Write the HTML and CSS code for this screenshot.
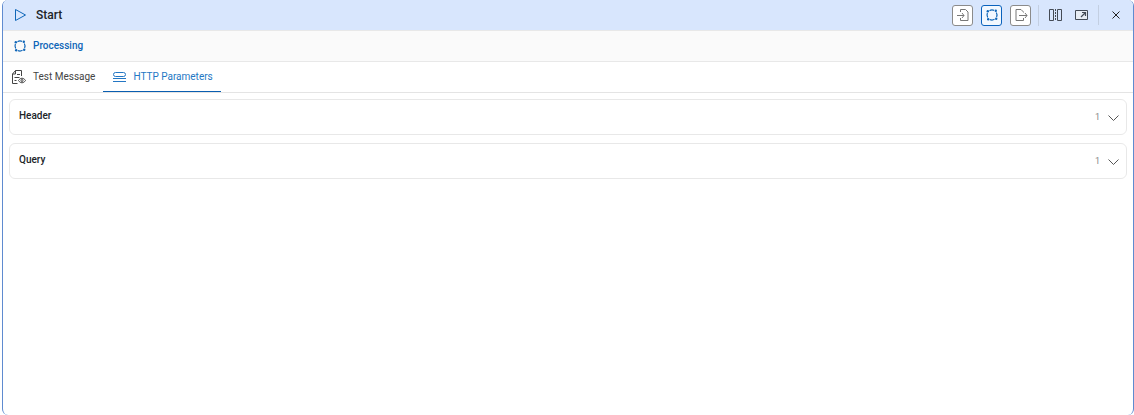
FILE: index.html
```html
<!DOCTYPE html>
<html lang="en">
<head>
    <meta charset="UTF-8">
    <meta name="viewport" content="width=device-width, initial-scale=1.0">
    <title>Start</title>
    <link rel="stylesheet" href="styles.css">
</head>
<body>
    <main class="panel">
        <header class="panel-header">
            <svg class="icon blue" viewBox="0 0 14 14"><path d="M2.500 1.500 12.500 7l-10 5.500z"/></svg>
            <h1 class="title">Start</h1>
            <div class="actions">
                <div class="steps">
                    <button type="button" class="step" aria-label="Input">
                        <svg class="icon" viewBox="0 0 14 14"><path d="M4.500 4V1.500H9.500L12 4v8.500H4.500V10M1 7.500h7M6 5l2 2.500-2 2.500"/></svg>
                    </button>
                    <button type="button" class="step active" aria-label="Processing">
                        <svg class="icon" viewBox="0 0 14 14"><path d="M4.500 2.700a5 5 0 0 1 4.500-.3M11.300 4.500a5 5 0 0 1 .3 4.500M9.500 11.300a5 5 0 0 1-4.500.3M2.700 9.500a5 5 0 0 1-.3-4.500" stroke-width="1.200"/><g fill="currentColor" stroke="none"><circle cx="10.800" cy="2.800" r="1.200"/><circle cx="11.200" cy="10.800" r="1.200"/><circle cx="3.200" cy="11.200" r="1.200"/><circle cx="2.800" cy="3.200" r="1.200"/></g></svg>
                    </button>
                    <button type="button" class="step" aria-label="Output">
                        <svg class="icon" viewBox="0 0 14 14"><path d="M9.500 4.500V4L7 1.500H2v11h7.500V10M5 7.500h8M11 5l2 2.500-2 2.500"/></svg>
                    </button>
                </div>
                <div class="tools">
                    <button type="button" class="tool" aria-label="Split view">
                        <svg class="icon" viewBox="0 0 14 14"><path d="M.5 1.500h4v11h-4zM8.500 1.500h4v11h-4z"/><path d="M6.500 1v12" stroke-dasharray="2 1"/></svg>
                    </button>
                    <button type="button" class="tool" aria-label="Maximize">
                        <svg class="icon" viewBox="0 0 14 14"><path d="M.5 2.500h12v9H.5z" fill="#e8edf3"/><path d="M6 9l4-4M7 4.500h3.500V8" stroke-width="1.200"/></svg>
                    </button>
                </div>
                <button type="button" class="tool close" aria-label="Close">
                    <svg class="icon" viewBox="0 0 14 14"><path d="m3.500 3.500 7 7M10.500 3.500l-7 7"/></svg>
                </button>
            </div>
        </header>

        <div class="section-bar">
            <svg class="icon blue" viewBox="0 0 14 14"><path d="M4.500 2.700a5 5 0 0 1 4.500-.3M11.300 4.500a5 5 0 0 1 .3 4.500M9.500 11.300a5 5 0 0 1-4.500.3M2.700 9.500a5 5 0 0 1-.3-4.500" stroke-width="1.200"/><g fill="currentColor" stroke="none"><circle cx="10.800" cy="2.800" r="1.200"/><circle cx="11.200" cy="10.800" r="1.200"/><circle cx="3.200" cy="11.200" r="1.200"/><circle cx="2.800" cy="3.200" r="1.200"/></g></svg>
            <h2 class="section-title">Processing</h2>
        </div>

        <div class="tabs" role="tablist">
            <button type="button" class="tab" role="tab" aria-selected="false">
                <svg class="icon" viewBox="0 0 14 14"><path d="M5.500 13.500H.5V4L3.500.5h6V6M3.500.5V4h-3M5 4.500h3M2.500 7.500h5M2.500 10.500h2"/><path d="M6.500 10.500c2-3 5-3 7 0-2 3-5 3-7 0z"/><circle cx="10" cy="10.500" r="1"/></svg>
                Test Message
            </button>
            <button type="button" class="tab selected" role="tab" aria-selected="true">
                <svg class="icon" viewBox="0 0 14 14"><rect x="1.500" y="2.500" width="12" height="4" rx="2"/><path d="M1 8.500h13M1 11.500h13"/></svg>
                HTTP Parameters
            </button>
        </div>

        <div class="groups">
            <button type="button" class="group" aria-expanded="false">
                <span class="group-name">Header</span>
                <span class="count">1</span>
                <svg class="icon chevron" viewBox="0 0 14 14"><path d="m2.500 5.500 5 5 5-5"/></svg>
            </button>
            <button type="button" class="group" aria-expanded="false">
                <span class="group-name">Query</span>
                <span class="count">1</span>
                <svg class="icon chevron" viewBox="0 0 14 14"><path d="m2.500 5.500 5 5 5-5"/></svg>
            </button>
        </div>
    </main>
</body>
</html>
```
FILE: styles.css
```css
* {
    box-sizing: border-box;
}

body {
    margin: 0;
    background-color: #fff;
    color: #202428;
    font: 10px/16px Roboto, "Open Sans", sans-serif;
}

h1,
h2 {
    margin: 0;
}

button {
    margin: 0;
    padding: 0;
    border: none;
    background: none;
    color: inherit;
    font: inherit;
    cursor: pointer;
}

.icon {
    display: block;
    flex: none;
    width: 14px;
    height: 14px;
    fill: none;
    stroke: currentColor;
}

.blue {
    color: #0f66b8;
}

.panel {
    min-height: 100vh;
    margin-left: 2px;
    border: 1px solid #5f8bd0;
    border-width: 0 1px;
    border-radius: 6px;
    overflow: hidden;
}

.panel-header {
    display: flex;
    align-items: center;
    gap: 9px;
    height: 30px;
    padding: 0 7px 0 10px;
    background-color: #d8e6fd;
}

.title {
    font-size: 12px;
    font-weight: 500;
}

.actions {
    display: flex;
    align-items: center;
    margin-left: auto;
}

.steps,
.tools {
    display: flex;
    align-items: center;
    gap: 8px;
    padding-right: 7px;
    border-right: 1px solid #c3cfe2;
}

.tools {
    gap: 6px;
    padding: 0 6px 0 7px;
}

.step {
    display: grid;
    place-items: center;
    width: 21px;
    height: 21px;
    border: 1px solid #8b8b8b;
    border-radius: 3px;
    background-color: #fff;
    color: #777;
}

.step.active {
    border-color: #0a62bd;
    background-color: #f2f8ff;
    color: #0f66b8;
}

.tool {
    display: grid;
    place-items: center;
    width: 20px;
    height: 20px;
    color: #444b55;
}

.close {
    margin-left: 7px;
    color: #222;
}

.section-bar {
    display: flex;
    align-items: center;
    gap: 6px;
    height: 32px;
    padding: 0 10px;
    border: 1px solid #e8e8e8;
    border-width: 1px 0;
    background-color: #fafafa;
}

.section-title {
    color: #0f66b8;
    font-size: 10px;
    font-weight: 500;
}

.tabs {
    display: flex;
    height: 31px;
    border-bottom: 1px solid #e4e4e4;
}

.tab {
    display: flex;
    align-items: center;
    gap: 7px;
    padding: 0 8px 0 9px;
    border-bottom: 1px solid transparent;
    color: #444;
}

.tab.selected {
    border-color: #0a5eb0;
    color: #2477c4;
}

.groups {
    display: flex;
    flex-direction: column;
    gap: 8px;
    padding: 6px;
}

.group {
    display: flex;
    align-items: center;
    gap: 6px;
    height: 36px;
    padding: 0 6px 0 9px;
    border: 1px solid #e8e8e8;
    border-radius: 6px;
    text-align: left;
}

.group-name {
    flex: 1;
    padding-bottom: 2px;
    font-weight: 500;
}

.count {
    color: #888;
    font-size: 9px;
}

.chevron {
    color: #555;
}
```
